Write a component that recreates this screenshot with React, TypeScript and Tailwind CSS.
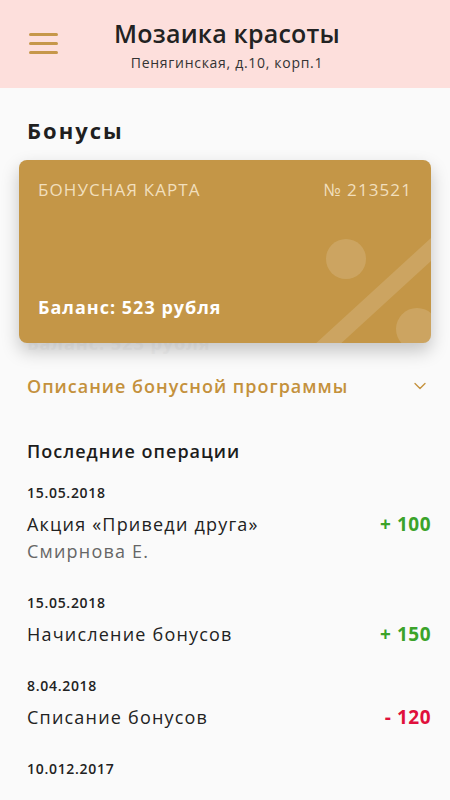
import { ChevronDown } from "lucide-react";

const ops = [
  { date: "15.05.2018", title: "Акция «Приведи друга»", sub: "Смирнова Е.", amount: "+ 100", plus: true },
  { date: "15.05.2018", title: "Начисление бонусов", amount: "+ 150", plus: true },
  { date: "8.04.2018", title: "Списание бонусов", amount: "- 120", plus: false },
];

const App = () => {
  return (
    <div className="w-[450px] h-[800px] overflow-hidden bg-[#fafafa] font-['Open_Sans',sans-serif] text-[#1c1c1c]">
      {/* Header */}
      <header className="h-[88px] bg-[#fddfdc] flex items-center relative">
        <button className="absolute left-[29px] top-[33px] flex flex-col gap-[6px]">
          <span className="block w-[29px] h-[3px] rounded-full bg-[#c6974a]" />
          <span className="block w-[29px] h-[3px] rounded-full bg-[#c6974a]" />
          <span className="block w-[29px] h-[3px] rounded-full bg-[#c6974a]" />
        </button>
        <div className="flex-1 flex flex-col items-center pt-[2px] pl-[4px]">
          <h1 className="text-[25px] leading-[30px] font-semibold tracking-[0.2px] text-[#222]">Мозаика красоты</h1>
          <p className="text-[14px] leading-[18px] mt-[6px] tracking-[0.7px] text-[#333]">Пенягинская, д.10, корп.1</p>
        </div>
      </header>

      <main className="px-[19px]">
        <h2 className="px-[8px] mt-[28px] text-[22px] leading-[28px] font-bold tracking-[2px] text-[#1f1f1f]">Бонусы</h2>

        {/* Card */}
        <div className="relative mt-[16px]">
          <div className="absolute left-[8px] top-[171px] text-[18px] leading-[24px] font-bold tracking-[1px] text-[#f3f3f3]">Баланс: 523 рубля</div>
          <div className="relative h-[183px] rounded-[8px] bg-[#c49647] overflow-hidden shadow-[0_8px_18px_rgba(0,0,0,0.22)] px-[19px] pt-[19px] pb-[24px] flex flex-col justify-between">
            <svg className="absolute inset-0" width="412" height="183" viewBox="0 0 412 183">
              <circle cx="327" cy="99" r="20" fill="#ffffff" fillOpacity="0.14" />
              <circle cx="398" cy="169" r="21" fill="#ffffff" fillOpacity="0.14" />
              <line x1="300" y1="192" x2="418" y2="84" stroke="#ffffff" strokeOpacity="0.14" strokeWidth="17" />
            </svg>
            <div className="relative flex justify-between text-[17px] leading-[22px] tracking-[1.1px] text-[#f1dfbd]">
              <span>БОНУСНАЯ КАРТА</span>
              <span>№ 213521</span>
            </div>
            <div className="relative text-[18px] leading-[24px] font-bold tracking-[1px] text-white">Баланс: 523 рубля</div>
          </div>
        </div>

        {/* Description */}
        <div className="mt-[31px] pl-[8px] flex items-center justify-between">
          <span className="text-[18px] leading-[24px] font-semibold tracking-[1px] text-[#c4913c]">Описание бонусной программы</span>
          <ChevronDown className="w-[20px] h-[20px] text-[#c4913c] mr-[1px]" strokeWidth={1.6} />
        </div>

        {/* Operations */}
        <h3 className="mt-[41px] px-[8px] text-[18px] leading-[24px] font-semibold tracking-[1px] text-[#1c1c1c]">Последние операции</h3>

        <div className="pl-[8px] mt-[21px] flex flex-col">
          {ops.map((op, i) => (
            <div key={i} className="mb-[31px]">
              <div className="text-[14px] leading-[18px] font-semibold tracking-[0.7px] text-[#222]">{op.date}</div>
              <div className="mt-[10px] flex justify-between items-center">
                <span className="text-[18px] leading-[24px] tracking-[1.2px] text-[#222]">{op.title}</span>
                <span className={op.plus ? "text-[19px] leading-[24px] font-bold tracking-[0.5px] text-[#3aa32a]" : "text-[19px] leading-[24px] font-bold tracking-[0.5px] text-[#e0103c]"}>{op.amount}</span>
              </div>
              {op.sub && <div className="mt-[3px] text-[18px] leading-[24px] tracking-[1.2px] text-[#666]">{op.sub}</div>}
            </div>
          ))}
          <div className="text-[14px] leading-[18px] font-semibold tracking-[0.7px] text-[#222]">10.012.2017</div>
        </div>
      </main>
    </div>
  );
};

export default App;
